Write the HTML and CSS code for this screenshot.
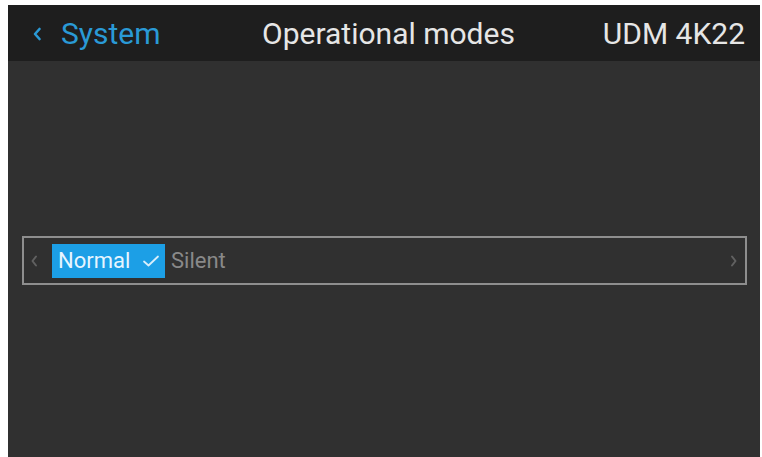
FILE: index.html
```html
<!DOCTYPE html>
<html>
<head>
<meta charset="utf-8">
<link rel="stylesheet" href="styles.css">
</head>
<body>
<div class="screen">
  <header class="topbar">
    <div class="back">
      <svg class="back-icon" width="10" height="14" viewBox="0 0 10 14"><path d="M7.5 2 L3 7 L7.5 12" fill="none" stroke="#2a9ad6" stroke-width="2.6" stroke-linecap="round" stroke-linejoin="round"/></svg>
      <span class="back-label">System</span>
    </div>
    <div class="title">Operational modes</div>
    <div class="device">UDM 4K22</div>
  </header>
  <main class="content">
    <div class="selector">
      <svg class="arrow" width="8" height="12" viewBox="0 0 8 12"><path d="M6 1.5 L2.5 6 L6 10.5" fill="none" stroke="#616161" stroke-width="2" stroke-linecap="round" stroke-linejoin="round"/></svg>
      <div class="options">
        <div class="option selected">
          <span>Normal</span>
          <svg class="check" width="18" height="14" viewBox="0 0 18 14"><path d="M2 7.5 L6.5 11.5 L16 2.5" fill="none" stroke="#d8eefb" stroke-width="1.8" stroke-linecap="round" stroke-linejoin="round"/></svg>
        </div>
        <div class="option">Silent</div>
      </div>
      <svg class="arrow" width="8" height="12" viewBox="0 0 8 12"><path d="M2 1.5 L5.5 6 L2 10.5" fill="none" stroke="#616161" stroke-width="2" stroke-linecap="round" stroke-linejoin="round"/></svg>
    </div>
  </main>
</div>
</body>
</html>
```

FILE: styles.css
```css
html, body {
  margin: 0;
  padding: 0;
  background: #ffffff;
}
body {
  font-family: Roboto, "Liberation Sans", sans-serif;
  width: 762px;
  height: 457px;
  overflow: hidden;
}
.screen {
  margin: 5px 2px 0 8px;
  width: 752px;
  height: 452px;
  background: #303030;
  display: flex;
  flex-direction: column;
}
.topbar {
  height: 56px;
  background: #1e1e1e;
  display: grid;
  grid-template-columns: 1fr auto 1fr;
  align-items: center;
  padding: 0 15px 0 24px;
  color: #e6e6e6;
  font-size: 30px;
}
.back {
  display: flex;
  align-items: center;
  gap: 19px;
  color: #2a9ad6;
}
.back-icon {
  margin-top: 1px;
}
.device {
  justify-self: end;
}
.content {
  flex: 1;
  padding: 175px 13px 0 14px;
}
.selector {
  height: 45px;
  border: 2px solid #8e8e8e;
  display: flex;
  align-items: center;
  padding: 0 7px 0 6px;
}
.options {
  flex: 1;
  display: flex;
  align-items: center;
  gap: 6px;
  margin-left: 14px;
  font-size: 22px;
}
.option {
  color: #898989;
}
.option.selected {
  background: #1c9fe6;
  color: #e6f5ff;
  height: 34px;
  width: 113px;
  box-sizing: border-box;
  display: flex;
  align-items: center;
  gap: 12px;
  padding-left: 6px;
}
.check {
  margin-top: 1px;
}
```
